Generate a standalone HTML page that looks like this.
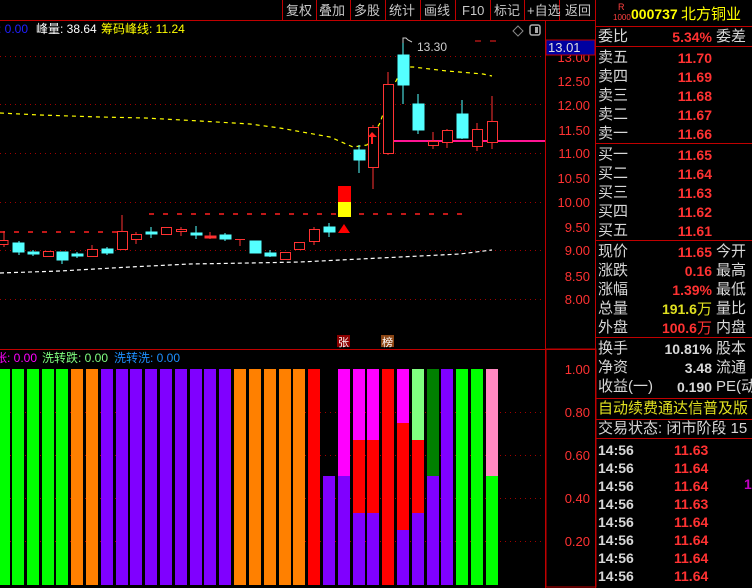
<!DOCTYPE html>
<html><head><meta charset="utf-8"><style>
body{margin:0;background:#000;width:752px;height:588px;overflow:hidden;position:relative;font-family:"Liberation Sans","Noto Sans CJK SC",sans-serif}
.t{position:absolute;white-space:nowrap;line-height:1}
.p{font-size:15px;color:#d8d8d8}
.n{font-size:14px;font-weight:bold;color:#ff3232;text-align:right;width:110px}
</style></head><body>
<svg width="752" height="588" style="position:absolute;left:0;top:0" font-family="Liberation Sans,Noto Sans CJK SC,sans-serif">
<line x1="0" y1="20.5" x2="596" y2="20.5" stroke="#c00000"/>
<g stroke="#c00000"><line x1="282.5" y1="0" x2="282.5" y2="20"/><line x1="316.5" y1="0" x2="316.5" y2="20"/><line x1="350.5" y1="0" x2="350.5" y2="20"/><line x1="385.5" y1="0" x2="385.5" y2="20"/><line x1="420.5" y1="0" x2="420.5" y2="20"/><line x1="455.5" y1="0" x2="455.5" y2="20"/><line x1="490.5" y1="0" x2="490.5" y2="20"/><line x1="524.5" y1="0" x2="524.5" y2="20"/><line x1="559.5" y1="0" x2="559.5" y2="20"/><line x1="595.5" y1="0" x2="595.5" y2="588"/></g>
<g fill="#c8c8c8" font-size="13"><text x="286" y="15">复权</text><text x="319" y="15">叠加</text><text x="354" y="15">多股</text><text x="389" y="15">统计</text><text x="424" y="15">画线</text><text x="462" y="15">F10</text><text x="494" y="15">标记</text><text x="527" y="15">+自选</text><text x="565" y="15">返回</text></g>
<line x1="545.5" y1="20" x2="545.5" y2="588" stroke="#c00000"/>
<line x1="0" y1="349.5" x2="596" y2="349.5" stroke="#c00000"/>
<g stroke="#a00000" stroke-dasharray="1 4">
<line x1="0" y1="56.5" x2="545" y2="56.5"/><line x1="0" y1="104.5" x2="545" y2="104.5"/><line x1="0" y1="153.5" x2="545" y2="153.5"/><line x1="0" y1="202.5" x2="545" y2="202.5"/><line x1="0" y1="250.5" x2="545" y2="250.5"/><line x1="0" y1="299.5" x2="545" y2="299.5"/>
<line x1="0" y1="412.5" x2="545" y2="412.5"/><line x1="0" y1="455.5" x2="545" y2="455.5"/><line x1="0" y1="498.5" x2="545" y2="498.5"/><line x1="0" y1="541.5" x2="545" y2="541.5"/>
</g>
<g fill="#ff3232" font-size="13" text-anchor="end">
<text x="590" y="62">13.00</text><text x="590" y="86">12.50</text><text x="590" y="110">12.00</text><text x="590" y="135">11.50</text><text x="590" y="158">11.00</text><text x="590" y="183">10.50</text><text x="590" y="207">10.00</text><text x="590" y="232">9.50</text><text x="590" y="255">9.00</text><text x="590" y="281">8.50</text><text x="590" y="304">8.00</text>
<text x="590" y="374">1.00</text><text x="590" y="417">0.80</text><text x="590" y="460">0.60</text><text x="590" y="503">0.40</text><text x="590" y="546">0.20</text>
</g>
<rect x="546" y="40" width="49" height="15" fill="#0000a0" stroke="#c00000"/>
<text x="548" y="52" fill="#e0e0e0" font-size="13">13.01</text>
<rect x="546" y="349" width="50" height="238" fill="none" stroke="#c00000"/>
<path d="M518 26 L523 31 L518 36 L513 31Z" fill="none" stroke="#888"/>
<rect x="530" y="25" width="10" height="10" rx="2" fill="none" stroke="#aaa" stroke-width="1.5"/><rect x="535" y="27" width="3" height="6" fill="#aaa"/>
<text x="-2" y="33" font-size="12" fill="#2020ff">: 0.00</text>
<text x="36" y="33" font-size="12" fill="#fff">峰量: 38.64</text>
<text x="101" y="33" font-size="12" fill="#ffff00">筹码峰线: 11.24</text>
<polyline points="0,113 40,115 100,117 145,118 200,121 250,124 280,128 330,137 353,147 367,145 380,123 390,93 403,67 413,67 447,71 483,74 492,76" fill="none" stroke="#ffff00" stroke-dasharray="4 4" stroke-width="1.2"/>
<polyline points="0,273 60,271 130,267 190,264 250,263 300,262 340,260 380,258 420,256 460,254 492,250" fill="none" stroke="#fff" stroke-dasharray="4 3" stroke-width="1.2"/>
<line x1="0" y1="232" x2="120" y2="232" stroke="#ff2020" stroke-dasharray="5 9" stroke-width="1.5"/>
<line x1="149" y1="214" x2="470" y2="214" stroke="#ff2020" stroke-dasharray="5 9" stroke-width="1.5"/>
<line x1="385" y1="141" x2="545" y2="141" stroke="#ff1493" stroke-width="2"/>
<g stroke="#54ffff" fill="#54ffff">
<line x1="19" y1="241" x2="19" y2="255"/><rect x="13" y="243" width="11" height="9"/>
<line x1="33" y1="250" x2="33" y2="256"/><rect x="28" y="252" width="11" height="2"/>
<line x1="62" y1="252" x2="62" y2="264"/><rect x="57" y="252" width="11" height="8"/>
<line x1="77" y1="252" x2="77" y2="258"/><rect x="72" y="254" width="11" height="2"/>
<rect x="102" y="249" width="11" height="4"/><line x1="107" y1="247" x2="107" y2="255"/>
<line x1="151" y1="227" x2="151" y2="238"/><rect x="146" y="232" width="11" height="2"/>
<line x1="196" y1="226" x2="196" y2="239"/><rect x="191" y="233" width="11" height="2"/>
<line x1="225" y1="233" x2="225" y2="241"/><rect x="220" y="235" width="11" height="4"/>
<rect x="250" y="241" width="11" height="12"/>
<line x1="270" y1="250" x2="270" y2="257"/><rect x="265" y="253" width="11" height="3"/>
<line x1="329" y1="223" x2="329" y2="237"/><rect x="324" y="227" width="11" height="5"/>
<line x1="359" y1="145" x2="359" y2="173"/><rect x="354" y="150" width="11" height="10"/>
<line x1="403" y1="43" x2="403" y2="104"/><rect x="398" y="55" width="11" height="30"/>
<line x1="418" y1="94" x2="418" y2="134"/><rect x="413" y="104" width="11" height="26"/>
<line x1="462" y1="100" x2="462" y2="139"/><rect x="457" y="114" width="11" height="24"/>
</g>
<g stroke="#ff3232" fill="#000">
<line x1="4" y1="231" x2="4" y2="247"/><rect x="-1" y="240.5" width="9" height="4"/>
<rect x="43.5" y="251.5" width="10" height="5"/>
<line x1="92" y1="245" x2="92" y2="249"/><rect x="87.5" y="249.5" width="10" height="7"/>
<line x1="122" y1="215" x2="122" y2="231"/><rect x="117.5" y="231.5" width="10" height="18"/>
<line x1="136" y1="232" x2="136" y2="244"/><rect x="131.5" y="234.5" width="10" height="5"/>
<rect x="161.5" y="227.5" width="10" height="7"/>
<line x1="181" y1="227" x2="181" y2="236"/><rect x="176.5" y="229.5" width="10" height="2"/>
<line x1="210" y1="232" x2="210" y2="239"/><rect x="205" y="236" width="11" height="2" fill="#ff3232"/>
<line x1="240" y1="239" x2="240" y2="246"/><line x1="235" y1="239.5" x2="245" y2="239.5"/>
<rect x="280.5" y="252.5" width="10" height="7"/>
<rect x="294.5" y="242.5" width="10" height="7"/>
<line x1="314" y1="227" x2="314" y2="245"/><rect x="309.5" y="229.5" width="10" height="12"/>
<line x1="373" y1="125" x2="373" y2="189"/><rect x="368.5" y="127.5" width="10" height="40"/>
<line x1="388" y1="72" x2="388" y2="155"/><rect x="383.5" y="84.5" width="10" height="69"/>
<line x1="433" y1="132" x2="433" y2="149"/><rect x="428.5" y="141.5" width="10" height="4"/>
<line x1="447" y1="129" x2="447" y2="148"/><rect x="442.5" y="130.5" width="10" height="12"/>
<line x1="477" y1="123" x2="477" y2="151"/><rect x="472.5" y="129.5" width="10" height="17"/>
<line x1="492" y1="96" x2="492" y2="149"/><rect x="487.5" y="121.5" width="10" height="21"/>
</g>
<path d="M368 137 L372 132 L377 137Z M371 137 h2 v7 h-2Z" fill="#ff2020"/>
<path d="M403 43 v-5 h3 l2 2 l4 2" fill="none" stroke="#ccc"/>
<text x="417" y="51" fill="#ccc" font-size="12">13.30</text>
<line x1="475" y1="41" x2="481" y2="41" stroke="#ff2020"/><line x1="490" y1="41" x2="496" y2="41" stroke="#ff2020"/>
<rect x="338" y="186" width="13" height="16" fill="#ff0000"/><rect x="338" y="202" width="13" height="15" fill="#ffff00"/>
<path d="M338 233 L344 224 L350 233Z" fill="#ff0000"/>
<rect x="337" y="335" width="13" height="12" fill="#8b0000"/><text x="338" y="346" font-size="11" fill="#fff">张</text>
<rect x="381" y="335" width="13" height="12" fill="#8b4513"/><text x="382" y="346" font-size="11" fill="#fff">榜</text>
<text x="-5" y="362" font-size="12" fill="#ff00ff">张: 0.00</text>
<text x="42" y="362" font-size="12" fill="#80ff80">洗转跌: 0.00</text>
<text x="114" y="362" font-size="12" fill="#1e90ff">洗转洗: 0.00</text>
<g>
<rect x="0" y="369" width="10" height="216" fill="#00ff00"/>
<rect x="12" y="369" width="12" height="216" fill="#00ff00"/>
<rect x="27" y="369" width="12" height="216" fill="#00ff00"/>
<rect x="42" y="369" width="12" height="216" fill="#00ff00"/>
<rect x="56" y="369" width="12" height="216" fill="#00ff00"/>
<rect x="71" y="369" width="12" height="216" fill="#ff8000"/>
<rect x="86" y="369" width="12" height="216" fill="#ff8000"/>
<rect x="101" y="369" width="12" height="216" fill="#8000ff"/>
<rect x="116" y="369" width="12" height="216" fill="#8000ff"/>
<rect x="130" y="369" width="12" height="216" fill="#8000ff"/>
<rect x="145" y="369" width="12" height="216" fill="#8000ff"/>
<rect x="160" y="369" width="12" height="216" fill="#8000ff"/>
<rect x="175" y="369" width="12" height="216" fill="#8000ff"/>
<rect x="190" y="369" width="12" height="216" fill="#8000ff"/>
<rect x="204" y="369" width="12" height="216" fill="#8000ff"/>
<rect x="219" y="369" width="12" height="216" fill="#8000ff"/>
<rect x="234" y="369" width="12" height="216" fill="#ff8000"/>
<rect x="249" y="369" width="12" height="216" fill="#ff8000"/>
<rect x="264" y="369" width="12" height="216" fill="#ff8000"/>
<rect x="279" y="369" width="12" height="216" fill="#ff8000"/>
<rect x="293" y="369" width="12" height="216" fill="#ff8000"/>
<rect x="308" y="369" width="12" height="216" fill="#ff0000"/>
<rect x="323" y="476" width="12" height="109" fill="#8000ff"/>
<rect x="338" y="369" width="12" height="107" fill="#ff00ff"/><rect x="338" y="476" width="12" height="109" fill="#8000ff"/>
<rect x="353" y="369" width="12" height="71" fill="#ff00ff"/><rect x="353" y="440" width="12" height="73" fill="#ff0000"/><rect x="353" y="513" width="12" height="72" fill="#8000ff"/>
<rect x="367" y="369" width="12" height="71" fill="#ff00ff"/><rect x="367" y="440" width="12" height="73" fill="#ff0000"/><rect x="367" y="513" width="12" height="72" fill="#8000ff"/>
<rect x="382" y="369" width="12" height="216" fill="#ff0000"/>
<rect x="397" y="369" width="12" height="54" fill="#ff00ff"/><rect x="397" y="423" width="12" height="107" fill="#ff0000"/><rect x="397" y="530" width="12" height="55" fill="#8000ff"/>
<rect x="412" y="369" width="12" height="71" fill="#80ff80"/><rect x="412" y="440" width="12" height="73" fill="#ff0000"/><rect x="412" y="513" width="12" height="72" fill="#8000ff"/>
<rect x="427" y="369" width="12" height="107" fill="#008000"/><rect x="427" y="476" width="12" height="109" fill="#8000ff"/>
<rect x="441" y="369" width="12" height="216" fill="#8000ff"/>
<rect x="456" y="369" width="12" height="216" fill="#00ff00"/>
<rect x="471" y="369" width="12" height="216" fill="#00ff00"/>
<rect x="486" y="369" width="12" height="107" fill="#ff88c0"/><rect x="486" y="476" width="12" height="109" fill="#00ff00"/>
</g>
<g stroke="#c00000"><line x1="596" y1="26.5" x2="752" y2="26.5"/><line x1="596" y1="46.5" x2="752" y2="46.5"/><line x1="596" y1="143.5" x2="752" y2="143.5"/><line x1="596" y1="240.5" x2="752" y2="240.5"/><line x1="596" y1="337.5" x2="752" y2="337.5"/><line x1="596" y1="398.5" x2="752" y2="398.5"/><line x1="596" y1="419.5" x2="752" y2="419.5"/><line x1="596" y1="438.5" x2="752" y2="438.5"/></g>
<text x="618" y="10" font-size="9" fill="#ff4040">R</text><text x="613" y="20" font-size="8" fill="#ff4040">1000</text>
<text x="631" y="19" font-size="14" font-weight="bold" fill="#ffff00">000737</text><text x="681" y="19" font-size="15" fill="#ffff00">北方铜业</text>
</svg>
<div class="t p" style="left:598px;top:29px">委比</div><div class="t n" style="left:602px;top:30px">5.34%</div><div class="t p" style="left:716px;top:29px">委差</div>
<div class="t p" style="left:598px;top:50px">卖五</div><div class="t n" style="left:602px;top:51px">11.70</div>
<div class="t p" style="left:598px;top:69px">卖四</div><div class="t n" style="left:602px;top:70px">11.69</div>
<div class="t p" style="left:598px;top:88px">卖三</div><div class="t n" style="left:602px;top:89px">11.68</div>
<div class="t p" style="left:598px;top:107px">卖二</div><div class="t n" style="left:602px;top:108px">11.67</div>
<div class="t p" style="left:598px;top:126px">卖一</div><div class="t n" style="left:602px;top:127px">11.66</div>
<div class="t p" style="left:598px;top:147px">买一</div><div class="t n" style="left:602px;top:148px">11.65</div>
<div class="t p" style="left:598px;top:166px">买二</div><div class="t n" style="left:602px;top:167px">11.64</div>
<div class="t p" style="left:598px;top:185px">买三</div><div class="t n" style="left:602px;top:186px">11.63</div>
<div class="t p" style="left:598px;top:204px">买四</div><div class="t n" style="left:602px;top:205px">11.62</div>
<div class="t p" style="left:598px;top:223px">买五</div><div class="t n" style="left:602px;top:224px">11.61</div>
<div class="t p" style="left:598px;top:244px">现价</div><div class="t n" style="left:602px;top:245px">11.65</div><div class="t p" style="left:716px;top:244px">今开</div>
<div class="t p" style="left:598px;top:263px">涨跌</div><div class="t n" style="left:602px;top:264px">0.16</div><div class="t p" style="left:716px;top:263px">最高</div>
<div class="t p" style="left:598px;top:282px">涨幅</div><div class="t n" style="left:602px;top:283px">1.39%</div><div class="t p" style="left:716px;top:282px">最低</div>
<div class="t p" style="left:598px;top:301px">总量</div><div class="t n" style="left:602px;top:302px;color:#e0e020">191.6<span style="font-weight:normal;font-size:15px">万</span></div><div class="t p" style="left:716px;top:301px">量比</div>
<div class="t p" style="left:598px;top:320px">外盘</div><div class="t n" style="left:602px;top:321px">100.6<span style="font-weight:normal;font-size:15px">万</span></div><div class="t p" style="left:716px;top:320px">内盘</div>
<div class="t p" style="left:598px;top:341px">换手</div><div class="t n" style="left:602px;top:342px;color:#d8d8d8">10.81%</div><div class="t p" style="left:716px;top:341px">股本</div>
<div class="t p" style="left:598px;top:360px">净资</div><div class="t n" style="left:602px;top:361px;color:#d8d8d8">3.48</div><div class="t p" style="left:716px;top:360px">流通</div>
<div class="t p" style="left:598px;top:379px">收益(一)</div><div class="t n" style="left:602px;top:380px;color:#d8d8d8">0.190</div><div class="t p" style="left:716px;top:379px">PE(动</div>
<div class="t p" style="left:598px;top:401px;color:#e0e020">自动续费通达信普及版</div>
<div class="t p" style="left:598px;top:421px">交易状态: 闭市阶段 15</div>
<div style="position:absolute;left:598px;top:441px;font-size:14px;font-weight:bold;line-height:18px;color:#d8d8d8">14:56<br>14:56<br>14:56<br>14:56<br>14:56<br>14:56<br>14:56<br>14:56</div>
<div style="position:absolute;left:674px;top:441px;font-size:14px;font-weight:bold;line-height:18px;color:#ff3232">11.63<br>11.64<br>11.64<br>11.63<br>11.64<br>11.64<br>11.64<br>11.64</div>
<div class="t" style="left:744px;top:477px;font-size:14px;font-weight:bold;color:#c000c0">1</div>
</body></html>
